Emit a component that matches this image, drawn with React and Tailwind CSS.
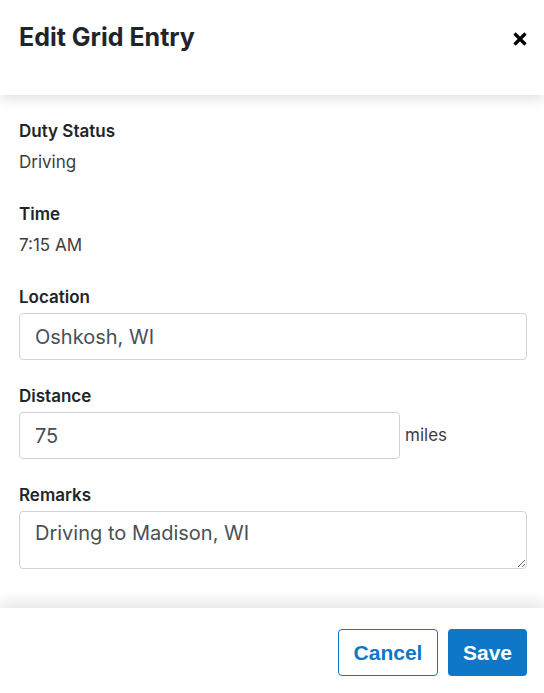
import React, { useState } from 'react';

// Modal for editing a single log grid entry
const EditGridEntry = () => {
  const [location, setLocation] = useState('Oshkosh, WI');
  const [distance, setDistance] = useState('75');
  const [remarks, setRemarks] = useState('Driving to Madison, WI');

  return (
    <div className="w-[544px] h-[693px] bg-white flex flex-col font-['Inter',sans-serif] text-[#212529] overflow-hidden">
      {/* Header */}
      <div className="relative z-10 h-[95px] flex-shrink-0 flex items-center justify-between px-[17px] pl-[19px] pb-[19px] bg-white shadow-[0_4px_12px_rgba(0,0,0,0.12)]">
        <h2 className="text-[25px] font-bold">Edit Grid Entry</h2>
        <button type="button" className="w-[14px] h-[14px] flex items-center justify-center mb-[-1px]">
          <svg width="14" height="14" viewBox="0 0 14 14">
            <path d="M1.5 1.5 L12.5 12.5 M12.5 1.5 L1.5 12.5" stroke="#000" strokeWidth="3.2" />
          </svg>
        </button>
      </div>

      {/* Body */}
      <div className="flex-1 px-[17px] pl-[19px] pt-[24px]">
        <div className="text-[17px] font-semibold leading-6">Duty Status</div>
        <div className="text-[17px] leading-6 mt-[7px] text-[#3d3d3d]">Driving</div>

        <div className="text-[17px] font-semibold leading-6 mt-[28px]">Time</div>
        <div className="text-[17px] leading-6 mt-[7px] text-[#3d3d3d]">7:15 AM</div>

        <div className="text-[17px] font-semibold leading-6 mt-[28px]">Location</div>
        <input
          value={location}
          onChange={(e) => setLocation(e.target.value)}
          className="mt-[4px] w-full h-[47px] px-[15px] border border-[#ced4da] rounded-[4px] text-[20px] text-[#495057] outline-none"
        />

        <div className="text-[17px] font-semibold leading-6 mt-[24px]">Distance</div>
        <div className="mt-[4px] flex items-center gap-[5px]">
          <input
            value={distance}
            onChange={(e) => setDistance(e.target.value)}
            className="w-[381px] h-[47px] px-[15px] border border-[#ced4da] rounded-[4px] text-[20px] text-[#495057] outline-none"
          />
          <span className="text-[17px] text-[#3d3d3d]">miles</span>
        </div>

        <div className="text-[17px] font-semibold leading-6 mt-[24px]">Remarks</div>
        <textarea
          value={remarks}
          onChange={(e) => setRemarks(e.target.value)}
          className="mt-[4px] block w-full h-[58px] px-[15px] py-[9px] border border-[#ced4da] rounded-[4px] text-[20px] leading-6 text-[#495057] outline-none"
        />
      </div>

      {/* Footer */}
      <div className="relative h-[85px] flex-shrink-0 flex items-start justify-end gap-[10px] px-[17px] pt-[21px] bg-white shadow-[0_-6px_14px_rgba(0,0,0,0.1)]">
        <button
          type="button"
          className="w-[100px] h-[47px] rounded-[4px] border border-[#0e77c7] text-[#0e77c7] text-[21px] font-bold font-['Liberation_Sans',sans-serif] bg-white"
        >
          Cancel
        </button>
        <button
          type="button"
          className="w-[79px] h-[47px] rounded-[4px] bg-[#0e77c7] text-white text-[21px] font-bold font-['Liberation_Sans',sans-serif]"
        >
          Save
        </button>
      </div>
    </div>
  );
};

export default EditGridEntry;
